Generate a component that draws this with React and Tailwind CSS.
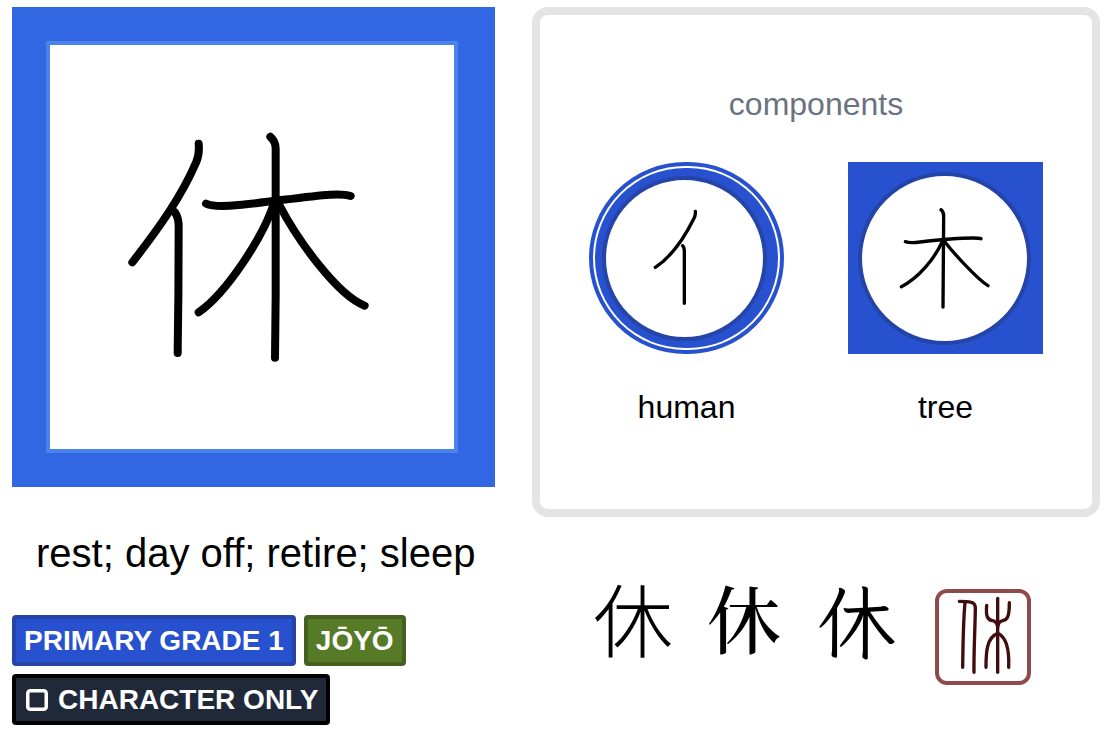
const KANJI = '休'

function Strokes({ viewBox, width, paths, label, className = 'text-black' }) {
  return (
    <svg
      viewBox={viewBox}
      role="img"
      aria-label={label}
      className={`block h-full w-full ${className}`}
      fill="none"
      stroke="currentColor"
      strokeWidth={width}
      strokeLinecap="round"
      strokeLinejoin="round"
    >
      {paths.map((d) => (
        <path key={d} d={d} />
      ))}
    </svg>
  )
}

const restStrokes = [
  'M266 101C268 122 267 138 258 158C215 258 150 350 67 457',
  'M194 306C203 318 206 330 206 350C206 480 205 600 203 729',
  'M288 281C310 291 350 289 385 285C470 278 590 258 660 254C690 252 710 254 722 258',
  'M481 80C492 90 497 100 497 115V560L495 743',
  'M492 280C460 380 350 548 266 607',
  'M508 285C560 385 680 555 764 587',
]

const humanStrokes = [
  'M346 184C347 193 346 198 342 205C315 260 275 320 226 352',
  'M308 287C312 291 313 296 313 305V460',
]

const treeStrokes = [
  'M226 275C240 280 255 278 270 276C330 269 390 264 430 264C440 264 447 264 453 266',
  'M333 179C338 183 341 190 341 198C341 300 340 400 339 471',
  'M338 272C315 325 265 385 214 410',
  'M342 272C375 315 445 390 474 407',
]

const sealStrokes = [
  'M88 49L110 50C130 51 137 56 136 72C135 140 131 200 132 262',
  'M105 52C99 120 99 190 98 247',
  'M203 40V262',
  'M170 61C167 95 173 105 188 107C200 110 202 118 203 125',
  'M238 53C238 95 232 105 218 107C206 110 204 118 203 125',
  'M168 247C168 200 170 158 203 145C232 158 238 200 236 247',
]

function Badge({ className, children }) {
  return (
    <li className={`flex items-center gap-2 rounded-sm border-4 px-2 py-1 text-[28px] leading-[35px] font-bold text-white uppercase ${className}`}>
      {children}
    </li>
  )
}

export default function App() {
  return (
    <main className="grid grid-cols-[483fr_568fr] items-start gap-x-[37px] bg-white pt-[7px] pr-[10px] pl-3 font-['Liberation_Sans',Arial,sans-serif] text-black">
      <section>
        <div className="bg-[#3267e3] py-[34px] pr-[37px] pl-[34px]">
          <div className="aspect-square border-4 border-[#4b83ee] bg-white">
            <Strokes viewBox="-180 -195 1212 1212" width={24} paths={restStrokes} label="rest" />
          </div>
        </div>
        <h1 className="mt-[42px] pl-6 text-[40px] leading-[48px]">rest; day off; retire; sleep</h1>
        <ul className="mt-[38px] flex flex-wrap gap-2">
          <Badge className="border-[#2544a8] bg-[#2751cf]">Primary Grade 1</Badge>
          <Badge className="border-[#46601f] bg-[#567a26]">Jōyō</Badge>
          <Badge className="border-black bg-[#202939]">
            <svg viewBox="0 0 26 26" className="h-[26px] w-[26px]" fill="none" stroke="currentColor" strokeWidth="3.5" aria-hidden="true">
              <rect x="3.75" y="3.75" width="18.5" height="18.5" rx="2.5" />
            </svg>
            Character only
          </Badge>
        </ul>
      </section>

      <section>
        <div className="flex h-[510px] flex-col items-center rounded-2xl border-8 border-[#e4e4e4] pt-[69px]">
          <h2 className="text-[32px] leading-10 text-[#6b7280]">components</h2>
          <div className="mt-[38px] flex gap-16 text-center text-[32px] leading-10">
            <figure>
              <div className="rounded-full border-4 border-[#2751cf] bg-white p-0.5">
                <div className="rounded-full bg-[#2751cf] pt-2 pr-[11px] pb-[7px] pl-[7px]">
                  <div className="size-[165px] rounded-full border-4 border-[#2544a8] bg-white">
                    <Strokes viewBox="78 90 471 471" width={10} paths={humanStrokes} label="human" />
                  </div>
                </div>
              </div>
              <figcaption className="mt-[33px]">human</figcaption>
            </figure>
            <figure>
              <div className="bg-[#2751cf] pt-[10px] pr-3 pb-[9px] pl-[10px]">
                <div className="size-[173px] rounded-full border-4 border-[#2544a8] bg-white">
                  <Strokes viewBox="96 78 495 495" width={10} paths={treeStrokes} label="tree" />
                </div>
              </div>
              <figcaption className="mt-[33px]">tree</figcaption>
            </figure>
          </div>
        </div>

        <div lang="ja" className="mt-[59px] flex items-start justify-center gap-8 pr-2 text-[80px] leading-[80px]">
          <span className="w-20 font-['Noto_Sans_CJK_JP',sans-serif] font-light">{KANJI}</span>
          <span className="w-20 pl-0.5 font-['Noto_Serif_CJK_JP','Noto_Sans_CJK_JP',serif] text-[74px] font-medium">{KANJI}</span>
          <span className="w-20 font-['Klee_One','Noto_Sans_CJK_JP',serif] font-semibold">{KANJI}</span>
          <div className="mt-[13px] ml-[6px] size-24 rounded-xl border-4 border-[#8f4b4b]">
            <Strokes viewBox="27 24 264 264" width={10} paths={sealStrokes} label="seal script" className="text-[#400c0c]" />
          </div>
        </div>
      </section>
    </main>
  )
}
